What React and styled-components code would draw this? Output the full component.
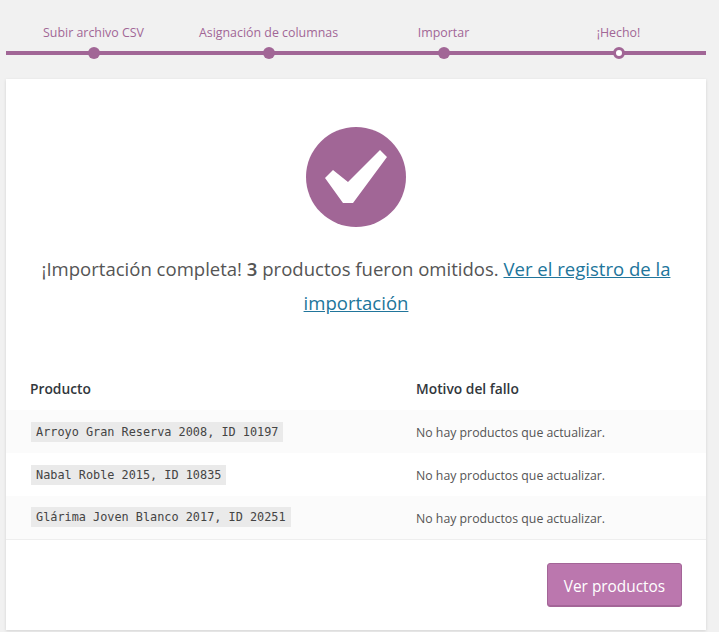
import React from 'react';
import styled, { createGlobalStyle } from 'styled-components';

const GlobalStyle = createGlobalStyle`
    html, body {
        margin: 0;
        padding: 0;
        background: #f1f1f1;
    }
    body {
        font-family: 'Open Sans', 'Noto Sans', sans-serif;
        color: #444;
    }
`

const Page = styled.div`
    width: 700px;
    height: 632px;
    padding-left: 6px;
`

const Steps = styled.ol`
    display: grid;
    grid-template-columns: repeat(4, 175px);
    margin: 0;
    padding: 25px 0 0;
    height: 54px;
    list-style: none;
`

const Step = styled.li`
    display: flex;
    flex-direction: column;
    align-items: center;
    height: 26px;
    border-bottom: 4px solid #a16696;
    color: #a16696;
    font-size: 12.4px;
    line-height: 16px;
    position: relative;
`

const Dot = styled.span`
    position: absolute;
    left: 50%;
    bottom: -8px;
    width: 12px;
    height: 12px;
    margin-left: -6px;
    box-sizing: border-box;
    border-radius: 50%;
    background: ${props => props.current ? '#fff' : '#a16696'};
    border: ${props => props.current ? '3px solid #a16696' : 'none'};
`

const Card = styled.main`
    width: 700px;
    height: 551px;
    background: #fff;
    box-shadow: 0 1px 3px rgba(0,0,0,0.13);
    display: flex;
    flex-direction: column;
`

const Done = styled.section`
    display: flex;
    flex-direction: column;
    align-items: center;
    padding-top: 48px;
    height: 290px;
    box-sizing: border-box;
`

const Badge = styled.svg`
    width: 100px;
    height: 100px;
    display: block;
`

const Message = styled.p`
    margin: 25px 0 0;
    padding: 0 24px;
    font-size: 18.55px;
    line-height: 34px;
    text-align: center;
    color: #555;

    strong {
        font-weight: 600;
    }
    a {
        color: #21759b;
        text-decoration: underline;
    }
`

const Table = styled.table`
    width: 100%;
    table-layout: fixed;
    border-collapse: collapse;
    border-bottom: 1px solid #eee;
`

const Head = styled.th`
    height: 39px;
    padding: 0 0 2px ${props => props.first ? '24px' : '0'};
    width: ${props => props.first ? '386px' : 'auto'};
    text-align: left;
    font-size: 13.8px;
    font-weight: 600;
    color: #32373c;
`

const Row = styled.tr`
    height: 43px;
    background: ${props => props.odd ? '#fbfbfb' : '#fff'};
`

const Cell = styled.td`
    padding: ${props => props.first ? '0 0 0 25px' : '2px 0 0'};
    font-size: 12.3px;
    color: #555;
`

const Code = styled.code`
    display: inline-block;
    padding: 0 5px;
    background: #eaeaea;
    color: #444;
    font-family: 'DejaVu Sans Mono', 'Liberation Mono', monospace;
    font-size: 11.85px;
    line-height: 20px;
`

const Actions = styled.footer`
    display: flex;
    justify-content: flex-end;
    padding: 23px 24px 0 0;
`

const Button = styled.a`
    display: flex;
    align-items: center;
    justify-content: center;
    width: 135px;
    height: 44px;
    box-sizing: border-box;
    background: #bb77ae;
    border-radius: 3px;
    border: 1px solid #a36597;
    box-shadow: inset 0 -1px 0 #a36597;
    color: #fff;
    font-size: 15.4px;
    padding-top: 3px;
`

const steps = ['Subir archivo CSV', 'Asignación de columnas', 'Importar', '¡Hecho!'];

const rows = [
    'Arroyo Gran Reserva 2008, ID 10197',
    'Nabal Roble 2015, ID 10835',
    'Glárima Joven Blanco 2017, ID 20251',
];

const App = () => {
    return (
        <Page>
            <GlobalStyle />
            <Steps>
                {steps.map((s, id) => (
                    <Step key={id}>
                        {s}
                        <Dot current={id === steps.length - 1} />
                    </Step>
                ))}
            </Steps>
            <Card>
                <Done>
                    <Badge viewBox="0 0 100 100">
                        <circle cx="50" cy="50" r="50" fill="#a16696" />
                        <path d="M19 51 L27 43 L42 55 L74 23 L81 30 L47 76 L37 76 Z" fill="#fff" />
                    </Badge>
                    <Message>
                        ¡Importación completa! <strong>3</strong> productos fueron omitidos. <a href="#log">Ver el registro de la importación</a>
                    </Message>
                </Done>
                <Table>
                    <thead>
                        <tr>
                            <Head first>Producto</Head>
                            <Head>Motivo del fallo</Head>
                        </tr>
                    </thead>
                    <tbody>
                        {rows.map((r, id) => (
                            <Row key={id} odd={id % 2 === 0}>
                                <Cell first><Code>{r}</Code></Cell>
                                <Cell>No hay productos que actualizar.</Cell>
                            </Row>
                        ))}
                    </tbody>
                </Table>
                <Actions>
                    <Button>Ver productos</Button>
                </Actions>
            </Card>
        </Page>
    );
};

export default App;
